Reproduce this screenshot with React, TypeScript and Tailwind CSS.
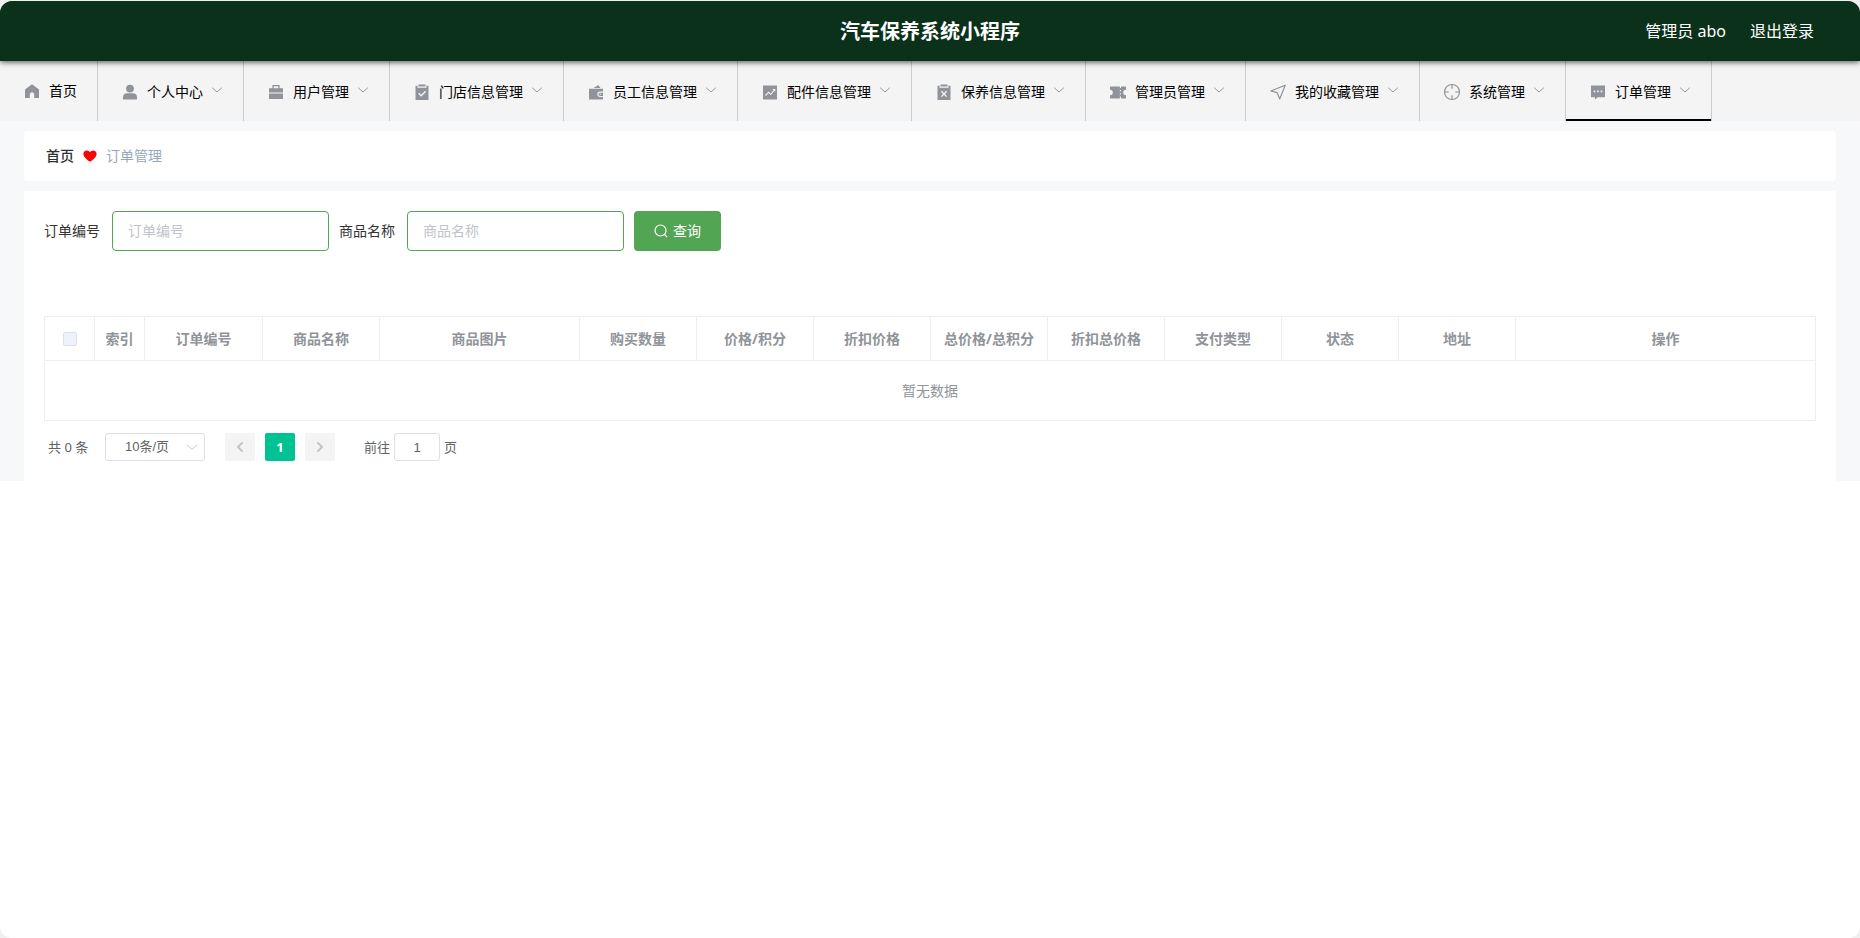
import React, { useState } from "react";

type IconName =
  | "home" | "user" | "briefcase" | "claim" | "wallet" | "marketing"
  | "release" | "ticket" | "position" | "aim" | "comment";

function NavIcon({ name }: { name: IconName }) {
  return (
    <svg viewBox="0 0 18 18" className="h-[18px] w-[18px] shrink-0 text-[#909399]" fill="currentColor" aria-hidden="true">
      {name === "home" && <path d="M9 2.2 2 7.6V16h4.800v-3.600a2.200 2.200 0 0 1 4.400 0V16H16V7.600z" />}
      {name === "user" && (
        <>
          <circle cx="9" cy="5.600" r="3.900" />
          <path d="M2 16.500v-2.300c0-2.400 1.600-3.900 4-3.900h6c2.400 0 4 1.500 4 3.900v2.300z" />
        </>
      )}
      {name === "briefcase" && (
        <path d="M5.400 2h7.200v3.200H16v4.300H2V5.200h3.400zM6.700 3.300v1.900h4.600V3.300zM2 10.600h14V16H2z" fillRule="evenodd" />
      )}
      {(name === "claim" || name === "release") && (
        <>
          <path d="M5.500 1.400h7v2.200h-7z" />
          <path d="M2.500 2.800h2v2h9v-2h2V17h-13z" />
          {name === "claim" ? (
            <path d="m5.600 10.300 2.600 2.500 4.400-4.500" fill="none" stroke="#f4f4f4" strokeWidth="1.300" />
          ) : (
            <path d="m6.400 8.200 5.200 5.400m0-5.400-5.200 5.400" fill="none" stroke="#f4f4f4" strokeWidth="1.300" />
          )}
        </>
      )}
      {name === "wallet" && (
        <>
          <path d="m6.500 5 4.700-3 2.300 3z" />
          <path d="M2 5.700h14v2.900h-3a2.700 2.700 0 0 0 0 5.400h3v2.500H2z" />
          <path d="M13 9.700h3v3.200h-3a1.600 1.600 0 0 1 0-3.200z" />
          <circle cx="13.200" cy="11.300" r=".7" fill="#f4f4f4" />
        </>
      )}
      {name === "marketing" && (
        <>
          <path d="M2 2.500h14v14H2z" />
          <path d="m4.500 12.500 3.200-3.300 2 2.300 3.800-4.700M11.800 6.500h1.900v1.800" fill="none" stroke="#f4f4f4" strokeWidth="1.100" />
        </>
      )}
      {name === "ticket" && (
        <>
          <path d="M1 3.500h9.900v12H1v-3.200a2.800 2.800 0 0 0 0-5.600z" />
          <path d="M12 3.500h5v3.200a2.800 2.800 0 0 0 0 5.600v3.200h-5v-2h-1v-2h1v-1.200h-1V8.300h1V7h-1V5h1z" />
        </>
      )}
      {name === "position" && (
        <path d="M1.800 8 16.200 2.200 10.700 16 8.200 9.700z" fill="none" stroke="currentColor" strokeWidth="1.200" strokeLinejoin="round" />
      )}
      {name === "aim" && (
        <>
          <circle cx="9" cy="9" r="7.500" fill="none" stroke="currentColor" strokeWidth="1.200" />
          <path d="M9 1.500v4.300M9 12.200v4.300M1.500 9h4.300M12.200 9h4.300" fill="none" stroke="currentColor" strokeWidth="1.200" />
        </>
      )}
      {name === "comment" && (
        <>
          <path d="M2 2.500h14v11.800H8.800L6 16.500v-2.200H2z" />
          <path d="M4.700 7.600h1.600v1.600H4.700zM8.200 7.600h1.600v1.600H8.200zM11.700 7.600h1.600v1.600h-1.600z" fill="#f4f4f4" />
        </>
      )}
    </svg>
  );
}

function Chevron({ className, d }: { className: string; d: string }) {
  return (
    <svg viewBox="0 0 12 12" className={className} fill="none" stroke="currentColor" aria-hidden="true">
      <path d={d} strokeLinecap="round" strokeLinejoin="round" />
    </svg>
  );
}

const menu: { label: string; icon: IconName }[] = [
  { label: "个人中心", icon: "user" },
  { label: "用户管理", icon: "briefcase" },
  { label: "门店信息管理", icon: "claim" },
  { label: "员工信息管理", icon: "wallet" },
  { label: "配件信息管理", icon: "marketing" },
  { label: "保养信息管理", icon: "release" },
  { label: "管理员管理", icon: "ticket" },
  { label: "我的收藏管理", icon: "position" },
  { label: "系统管理", icon: "aim" },
  { label: "订单管理", icon: "comment" },
];

const columns = [
  { label: "订单编号", width: "w-[118px]" },
  { label: "商品名称", width: "" },
  { label: "商品图片", width: "w-[200px]" },
  { label: "购买数量", width: "" },
  { label: "价格/积分", width: "" },
  { label: "折扣价格", width: "" },
  { label: "总价格/总积分", width: "" },
  { label: "折扣总价格", width: "" },
  { label: "支付类型", width: "" },
  { label: "状态", width: "" },
  { label: "地址", width: "" },
  { label: "操作", width: "w-[300px]" },
];

function Field({ id, label }: { id: string; label: string }) {
  return (
    <div className="flex items-center gap-3">
      <label htmlFor={id} className="text-[#333]">{label}</label>
      <input
        id={id}
        type="text"
        placeholder={label}
        className="h-10 w-[217px] rounded border border-[#52a552] bg-white px-[15px] pb-px text-[#606266] outline-none placeholder:text-[#c0c4cc]"
      />
    </div>
  );
}

export default function App() {
  const [active, setActive] = useState("订单管理");
  const [page, setPage] = useState("1");

  return (
    <div className="min-h-screen bg-[#f0f0f0] pt-px font-['Noto_Sans','Noto_Sans_CJK_SC',sans-serif] text-sm">
      <div className="min-h-[calc(100vh-1px)] overflow-hidden rounded-xl bg-white">
        <header className="relative z-10 grid h-[60px] grid-cols-[1fr_auto_1fr] items-center bg-[#0b311a] px-[46px] text-white shadow-[0_1px_6px_rgba(0,0,0,0.7)]">
          <h1 className="col-start-2 pt-0.5 text-xl font-bold">汽车保养系统小程序</h1>
          <div className="flex items-center justify-end gap-6 text-base">
            <span>管理员 abo</span>
            <button type="button">退出登录</button>
          </div>
        </header>

        <nav className="flex h-[60px] bg-[#f4f4f4] text-black">
          <a href="#home" className="flex items-center gap-2 border-r border-[#ccc] pr-5 pl-[23px]">
            <NavIcon name="home" />
            首页
          </a>
          {menu.map((item) => (
            <button
              key={item.label}
              type="button"
              onClick={() => setActive(item.label)}
              className={
                "flex items-center border-r border-r-[#ccc] pt-px pr-5 pl-[23px] " +
                (active === item.label ? "shadow-[inset_0_-2px_0_#000]" : "")
              }
            >
              <NavIcon name={item.icon} />
              <span className="ml-2">{item.label}</span>
              <Chevron className="mb-1 ml-2 h-3 w-3 text-[#999]" d="M1.500 4 6 8 10.500 4" />
            </button>
          ))}
        </nav>

        <main className="bg-[#f6f8fa] px-6 pt-[10px]">
          <div className="flex h-[50px] items-center rounded bg-white px-[22px]">
            <a href="#home" className="font-medium text-[#303133]">首页</a>
            <svg viewBox="0 0 14 14" className="mx-[9px] h-[14px] w-[14px] text-[#f00]" fill="currentColor" aria-hidden="true">
              <path d="M7 12.800C3.500 10.500.4 8 .4 4.800.4 2.800 1.900 1.400 3.700 1.400c1.400 0 2.600.7 3.300 1.900.7-1.200 1.900-1.900 3.300-1.900 1.800 0 3.300 1.400 3.300 3.400 0 3.200-3.100 5.700-6.600 8z" />
            </svg>
            <span className="text-[#97a8be]">订单管理</span>
          </div>

          <section className="mt-[10px] bg-white p-5">
            <form className="flex items-center gap-[10px]" onSubmit={(e) => e.preventDefault()}>
              <Field id="order-no" label="订单编号" />
              <Field id="product-name" label="商品名称" />
              <button type="submit" className="flex h-10 items-center gap-[5px] rounded bg-[#52a552] px-5 text-white">
                <svg viewBox="0 0 14 14" className="h-[14px] w-[14px]" fill="none" stroke="currentColor" strokeWidth="1.200" aria-hidden="true">
                  <circle cx="6.500" cy="6.500" r="5.500" />
                  <path d="m10.500 10.500 2.600 2.600" />
                </svg>
                查询
              </button>
            </form>

            <table className="mt-[65px] w-full table-fixed border-collapse text-[#909399]">
              <thead>
                <tr className="h-11">
                  <th className="w-[50px] border border-[#ebeef5]">
                    <input
                      type="checkbox"
                      disabled
                      aria-label="全选"
                      className="mx-auto block h-[14px] w-[14px] appearance-none rounded-xs border border-[#dcdfe6] bg-[#edf2fc]"
                    />
                  </th>
                  <th className="w-[50px] border border-[#ebeef5] font-bold">索引</th>
                  {columns.map((c) => (
                    <th key={c.label} className={"border border-[#ebeef5] font-bold whitespace-nowrap " + c.width}>
                      {c.label}
                    </th>
                  ))}
                </tr>
              </thead>
              <tbody>
                <tr className="h-[60px]">
                  <td colSpan={14} className="border border-[#ebeef5] text-center">暂无数据</td>
                </tr>
              </tbody>
            </table>

            <div className="mt-3 flex h-7 items-center px-1 text-[13px] text-[#606266]">
              <span className="w-[57px]">共 0 条</span>
              <div className="relative">
                <select
                  aria-label="每页条数"
                  className="block h-7 w-[100px] appearance-none rounded-[3px] border border-[#dcdfe6] bg-white pt-px pr-6 pl-[19px] font-['Liberation_Sans','Noto_Sans_CJK_SC',sans-serif] outline-none"
                >
                  <option>10条/页</option>
                  <option>20条/页</option>
                  <option>50条/页</option>
                </select>
                <Chevron className="pointer-events-none absolute top-2 right-[7px] h-3 w-3 text-[#c0c4cc]" d="M1.500 4 6 8.500 10.500 4" />
              </div>
              <div className="ml-5 flex gap-[10px]">
                <button type="button" disabled aria-label="上一页" className="flex h-7 w-[30px] items-center justify-center rounded-xs bg-[#f4f4f5] text-[#c0c4cc]">
                  <Chevron className="h-3 w-3 stroke-2" d="M8 2 4 6 8 10" />
                </button>
                <button type="button" className="h-7 w-[30px] rounded-xs bg-[#00c292] font-bold text-white">1</button>
                <button type="button" disabled aria-label="下一页" className="flex h-7 w-[30px] items-center justify-center rounded-xs bg-[#f4f4f5] text-[#c0c4cc]">
                  <Chevron className="h-3 w-3 stroke-2" d="M4 2 8 6 4 10" />
                </button>
              </div>
              <label htmlFor="jump" className="ml-[29px]">前往</label>
              <input
                id="jump"
                value={page}
                onChange={(e) => setPage(e.target.value)}
                className="mx-1 h-7 w-[46px] rounded-[3px] border border-[#dcdfe6] bg-white text-center font-['Liberation_Sans',sans-serif] outline-none"
              />
              <span>页</span>
            </div>
          </section>
        </main>
      </div>
    </div>
  );
}
